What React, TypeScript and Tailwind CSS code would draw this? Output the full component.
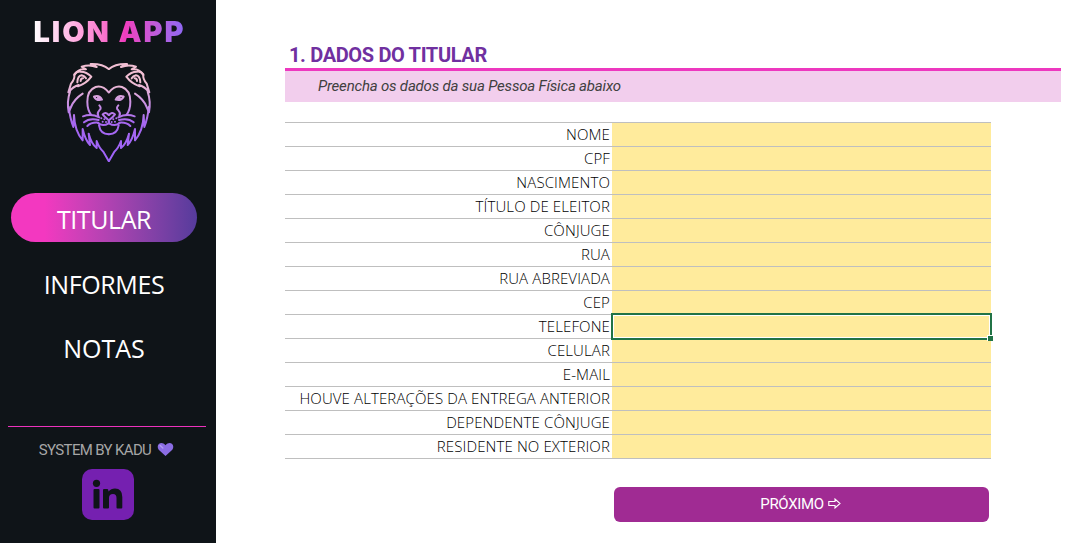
const fields = [
  'NOME', 'CPF', 'NASCIMENTO', 'TÍTULO DE ELEITOR', 'CÔNJUGE', 'RUA', 'RUA ABREVIADA',
  'CEP', 'TELEFONE', 'CELULAR', 'E-MAIL', 'HOUVE ALTERAÇÕES DA ENTREGA ANTERIOR',
  'DEPENDENTE CÔNJUGE', 'RESIDENTE NO EXTERIOR',
];

function LionHalf() {
  return (
    <g>
      <path d="M158 42 Q140 26 104 27 L122 36 Q100 27 77 35 L90 43 Q68 40 55 58 Q57 72 45 86 L37 112 Q52 94 68 90 L66 94 Q92 84 104 67" />
      <path d="M55 60 Q62 48 74 50 Q92 50 106 65" />
      <path d="M64 82 Q65 62 77 61 Q86 63 90 70 M74 78 Q74 70 81 70" />
      <path d="M42 110 Q32 140 38 172 L45 156 Q55 132 80 116" />
      <path d="M38 155 Q42 190 52 216 L54 180 Q56 228 80 256 L80 222 Q88 256 102 270 L98 236 Q106 266 122 279 L122 258 Q130 280 142 290 L158 318" />
      <path d="M158 112 Q140 90 119 96 Q94 105 94 140 Q94 165 106 180" />
      <path d="M114 125 Q130 119 138 134 Q122 139 114 125 M126 128 L129 131" />
      <path d="M130 151 Q138 159 130 166 Q122 174 127 183" />
      <path d="M158 180 Q149 169 140 178 Q145 185 158 196 V205 M158 205 Q140 216 126 204" />
      <path d="M129 211 Q133 237 158 238" />
      <path d="M130 187 Q106 175 81 184 M128 195 Q100 188 84 202 M127 203 Q106 201 94 213" />
      <path d="M136 190 h.1 M145 193 h.1 M140 200 h.1 M150 201 h.1" />
    </g>
  );
}

function Lion() {
  return (
    <svg className="ml-px h-28 w-[106px]" viewBox="0 0 318 336" fill="none" stroke="url(#mane)" strokeWidth="6" strokeLinecap="round" strokeLinejoin="round">
      <defs>
        <linearGradient id="mane" gradientUnits="userSpaceOnUse" x1="0" y1="24" x2="0" y2="318">
          <stop offset="0.2" stopColor="#f1bfd3" />
          <stop offset="0.6" stopColor="#a768f0" />
          <stop offset="1" stopColor="#9d62f8" />
        </linearGradient>
      </defs>
      <LionHalf />
      <g transform="matrix(-1 0 0 1 317 0)"><LionHalf /></g>
    </svg>
  );
}

function LinkedIn() {
  return (
    <svg className="mt-2 mr-px h-[51px] w-[52px]" viewBox="0 0 52 51">
      <rect width="52" height="51" rx="10" fill="#7520b0" />
      <g fill="#0f1418">
        <circle cx="14.5" cy="14.3" r="3.6" />
        <rect x="11.5" y="20" width="6" height="19.5" rx="1" />
        <path d="M21 21Q21 20 22 20H25.5Q26.5 20 26.5 22.5Q29 19.5 33 19.5Q40.3 19.5 40.3 28V38.5Q40.3 39.5 39.3 39.5H35.5Q34.5 39.5 34.5 38.5V29Q34.5 25 31 25Q27 25 27 29V38.5Q27 39.5 26 39.5H22Q21 39.5 21 38.5Z" />
      </g>
    </svg>
  );
}

export default function App() {
  return (
    <div className="flex h-[543px] w-[1072px] overflow-hidden bg-white">
      <aside className="flex w-[216px] shrink-0 flex-col items-center bg-[#0f1418] font-['Open_Sans',sans-serif] text-white">
        <h1 className="mt-[14px] ml-[3px] h-[41px] bg-linear-to-r from-white via-[#f03cbe] via-60% to-[#8a68f5] bg-clip-text font-['Inter',sans-serif] text-[29px] leading-9 font-black tracking-[1.95px] whitespace-nowrap text-transparent">LION APP</h1>
        <Lion />
        <nav className="mt-[26px] mr-2 flex flex-col items-center gap-[15px] text-[25px] tracking-[-0.4px]">
          <a className="flex h-[49px] w-[186px] items-center justify-center rounded-full bg-linear-to-r from-[#f338c0] from-18% to-[#563b9c] pt-1">TITULAR</a>
          <a className="flex h-[49px] items-center pt-1.5">INFORMES</a>
          <a className="flex h-[49px] items-center pt-1.5 tracking-normal">NOTAS</a>
        </nav>
        <div className="mt-[56px] mr-[3px] h-px w-[198px] bg-[#ed32bd]" />
        <div className="mt-3 mr-[3px] flex h-[22px] items-center gap-1.5 font-['Roboto',sans-serif] text-[15px] tracking-[-0.65px] text-[#a6a6a6]">
          <span>SYSTEM BY KADU</span>
          <svg className="mb-0.5 h-[15px] w-[17px]" viewBox="0 0 17 15">
            <path d="M8.5 14 1.7 7.7C-1.7 2.5 4.5-1.8 8.5 3.2 12.5-1.8 18.7 2.5 15.3 7.7Z" fill="#8b6de4" />
            <path d="M3.2 3.5 5.8 6" stroke="#b19bf2" strokeWidth="1.5" strokeLinecap="round" />
          </svg>
        </div>
        <LinkedIn />
      </aside>
      <main className="flex flex-1 flex-col pl-[69px]">
        <h2 className="mt-[42px] h-[26px] pl-1 font-['Roboto',sans-serif] text-[20px] leading-[26px] font-bold tracking-[-0.35px] text-[#7030a0]">1. DADOS DO TITULAR</h2>
        <p className="h-[34px] w-[776px] border-t-3 border-[#ed38bf] bg-[#f2ceed] pl-[33px] font-['Roboto',sans-serif] text-[15px] leading-[30px] tracking-[-0.19px] text-[#404040] italic">Preencha os dados da sua Pessoa Física abaixo</p>
        <div className="mt-5 w-[706px] border-t border-[#bfbfbf]">
          {fields.map((field) => (
            <div key={field} className="flex h-6 border-b border-[#bfbfbf]">
              <span className="w-[327px] pr-[2px] text-right font-['Open_Sans',sans-serif] text-[15px] leading-[22px] font-light tracking-[0.12px] whitespace-nowrap text-black">{field}</span>
              <div className="relative flex-1 bg-[#ffeb9c]">
                {field === 'TELEFONE' && (
                  <div className="absolute -top-[2px] -left-px z-10 h-[27px] w-[381px] border-2 border-[#217346] inset-ring-1 inset-ring-white">
                    <div className="absolute -right-[3px] -bottom-[3px] size-[6px] border-t border-l border-white bg-[#217346]" />
                  </div>
                )}
              </div>
            </div>
          ))}
        </div>
        <button className="mt-7 ml-[329px] flex h-[35px] w-[375px] items-center justify-center gap-1 rounded-md bg-[#a02b93] pr-[2px] font-['Roboto',sans-serif] text-[15px] tracking-[-0.35px] text-white">
          PRÓXIMO
          <svg className="mb-0.5 h-[11px] w-[13px]" viewBox="0 0 13 11" fill="none" stroke="currentColor" strokeWidth="1.1"><path d="M.8 3.5H7V1L12 5.5 7 10V7.5H.8Z" /></svg>
        </button>
      </main>
    </div>
  );
}
